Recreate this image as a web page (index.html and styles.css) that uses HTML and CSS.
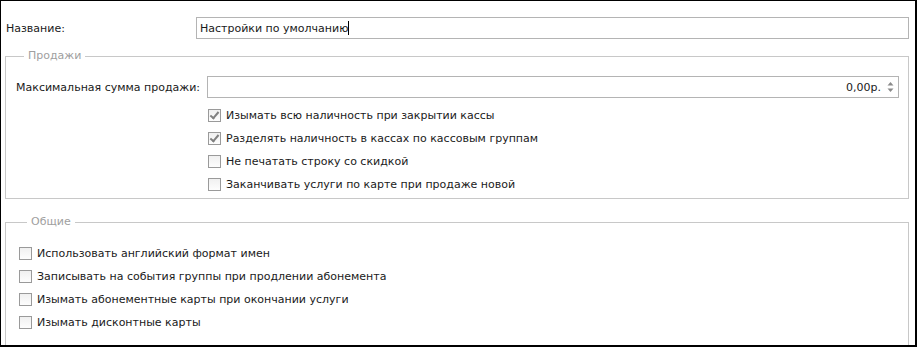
FILE: index.html
```html
<!DOCTYPE html>
<html lang="ru">
<head>
    <meta charset="UTF-8">
    <title>Настройки</title>
    <link rel="stylesheet" href="styles.css">
</head>
<body>
    <div class="window">
        <div class="name-row">
            <label class="name-label" for="name">Название:</label>
            <div class="text-box name-box">
                <span class="value">Настройки по умолчанию</span><span class="caret"></span>
            </div>
        </div>

        <fieldset class="group group-sales">
            <legend>Продажи</legend>

            <div class="amount-row">
                <span class="amount-label">Максимальная сумма продажи:</span>
                <div class="text-box amount-box">
                    <span class="amount-value">0,00р.</span>
                    <span class="spin">
                        <svg width="7" height="14" viewBox="0 0 7 14">
                            <path d="M3.5 2 L6.5 5.5 L0.5 5.5 Z" fill="#8a8a8a"/>
                            <path d="M3.5 12 L6.5 8.5 L0.5 8.5 Z" fill="#8a8a8a"/>
                        </svg>
                    </span>
                </div>
            </div>

            <ul class="checks checks-sales">
                <li><span class="check checked"></span>Изымать всю наличность при закрытии кассы</li>
                <li><span class="check checked"></span>Разделять наличность в кассах по кассовым группам</li>
                <li><span class="check"></span>Не печатать строку со скидкой</li>
                <li><span class="check"></span>Заканчивать услуги по карте при продаже новой</li>
            </ul>
        </fieldset>

        <fieldset class="group group-common">
            <legend>Общие</legend>
            <ul class="checks">
                <li><span class="check"></span>Использовать английский формат имен</li>
                <li><span class="check"></span>Записывать на события группы при продлении абонемента</li>
                <li><span class="check"></span>Изымать абонементные карты при окончании услуги</li>
                <li><span class="check"></span>Изымать дисконтные карты</li>
            </ul>
        </fieldset>
    </div>
</body>
</html>
```

FILE: styles.css
```css
/* Base */
* {
  box-sizing: border-box;
  margin: 0;
  padding: 0;
}

body {
  background: #ffffff;
  font-family: "DejaVu Sans", "Noto Sans", sans-serif;
  font-size: 11px;
  color: #1a1a1a;
}

/* Window frame */
.window {
  width: 917px;
  height: 347px;
  overflow: hidden;
  background: #ffffff;
  border-left: 1px solid #000;
  border-top: 1px solid #000;
  border-right: 2px solid #000;
  border-bottom: 2px solid #000;
  padding: 0 6px 0 4px;
}

/* Text boxes */
.text-box {
  border: 1px solid #b4b4b4;
  background: #fff;
  height: 22px;
  display: flex;
  align-items: center;
}

/* Name row */
.name-row {
  display: flex;
  align-items: center;
  margin-top: 16px;
}

.name-label {
  width: 191px;
  padding-left: 1px;
}

.name-box {
  flex: 1;
  padding-left: 3px;
}

.caret {
  display: inline-block;
  width: 1px;
  height: 14px;
  background: #000;
}

/* Group boxes */
.group {
  border: 1px solid #c8c8c8;
  padding: 0;
  min-width: 0;
}

.group legend {
  color: #a0a0a0;
  margin-left: 8px;
  padding: 0 4px;
  line-height: 16px;
}

.group-sales {
  margin-top: 9px;
  height: 151px;
  padding: 12px 9px 0 10px;
}

.group-common {
  margin-top: 15px;
  height: 150px;
  padding: 12px 0 0 13px;
}

/* Amount row */
.amount-row {
  display: flex;
  align-items: center;
}

.amount-label {
  width: 191px;
}

.amount-box {
  flex: 1;
  justify-content: flex-end;
  padding-right: 4px;
}

.spin {
  display: flex;
  margin-left: 6px;
}

/* Check boxes */
.checks {
  list-style: none;
}

.checks-sales {
  margin-top: 6px;
  padding-left: 192px;
}

.checks li {
  display: flex;
  align-items: center;
  height: 23px;
}

.check {
  width: 13px;
  height: 13px;
  border: 1px solid #9a9a9a;
  background: linear-gradient(#f0f0f0, #fdfdfd);
  margin-right: 5px;
  position: relative;
}

.check.checked::after {
  content: "";
  position: absolute;
  left: 3px;
  top: 0px;
  width: 3px;
  height: 7px;
  border-right: 2px solid #808080;
  border-bottom: 2px solid #808080;
  transform: rotate(40deg);
}
```
